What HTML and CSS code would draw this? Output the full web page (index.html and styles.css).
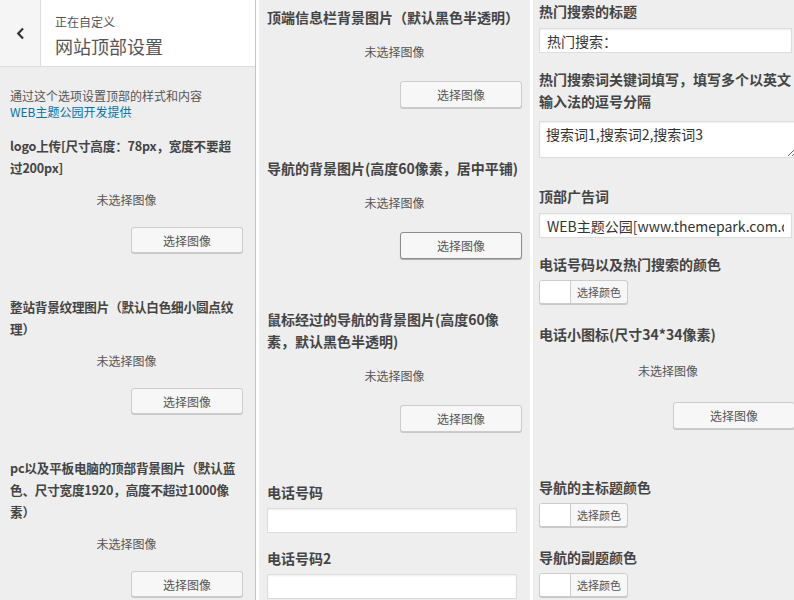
FILE: index.html
```html
<!DOCTYPE html>
<html lang="zh-CN">
<head>
    <meta charset="UTF-8">
    <meta name="viewport" content="width=device-width, initial-scale=1.0">
    <title>网站顶部设置</title>

    <link rel="stylesheet" href="styles.css">

</head>
<body>

    <div class="screens">

        <!-- panel 1 -->
        <section class="panel panel-first">
            <header class="panel-head">
                <div class="back-btn">
                    <svg width="9" height="13" viewBox="0 0 9 13">
                        <path d="M7 1.5 L2.2 6.5 L7 11.5" fill="none" stroke="#333" stroke-width="2.2"/>
                    </svg>
                </div>
                <div class="head-title">
                    <span class="head-sub">正在自定义</span>
                    <h2 class="head-main">网站顶部设置</h2>
                </div>
            </header>
            <div class="panel-body">
                <p class="panel-desc">通过这个选项设置顶部的样式和内容<br><a class="panel-link" href="#">WEB主题公园开发提供</a></p>

                <div class="control control-image">
                    <span class="control-title">logo上传[尺寸高度：78px，宽度不要超<br>过200px]</span>
                    <div class="placeholder">未选择图像</div>
                    <div class="actions"><button class="button">选择图像</button></div>
                </div>
                <div class="control control-image">
                    <span class="control-title">整站背景纹理图片（默认白色细小圆点纹<br>理）</span>
                    <div class="placeholder">未选择图像</div>
                    <div class="actions"><button class="button">选择图像</button></div>
                </div>
                <div class="control control-image">
                    <span class="control-title">pc以及平板电脑的顶部背景图片（默认蓝<br>色、尺寸宽度1920，高度不超过1000像<br>素）</span>
                    <div class="placeholder">未选择图像</div>
                    <div class="actions"><button class="button">选择图像</button></div>
                </div>
            </div>
        </section>

        <!-- panel 2 -->
        <section class="panel panel-mid">
            <div class="control control-image">
                <span class="control-title">顶端信息栏背景图片（默认黑色半透明）</span>
                <div class="placeholder">未选择图像</div>
                <div class="actions"><button class="button">选择图像</button></div>
            </div>
            <div class="control control-image">
                <span class="control-title">导航的背景图片(高度60像素，居中平铺)</span>
                <div class="placeholder">未选择图像</div>
                <div class="actions"><button class="button is-focus">选择图像</button></div>
            </div>
            <div class="control control-image">
                <span class="control-title">鼠标经过的导航的背景图片(高度60像<br>素，默认黑色半透明)</span>
                <div class="placeholder">未选择图像</div>
                <div class="actions"><button class="button">选择图像</button></div>
            </div>
            <div class="control control-text">
                <span class="control-title">电话号码</span>
                <input class="field" type="text" value="">
            </div>
            <div class="control control-text">
                <span class="control-title">电话号码2</span>
                <input class="field" type="text" value="">
            </div>
        </section>

        <!-- panel 3 -->
        <section class="panel panel-last">
            <div class="control control-text">
                <span class="control-title">热门搜索的标题</span>
                <input class="field" type="text" value="热门搜索：">
            </div>
            <div class="control control-area">
                <span class="control-title">热门搜索词关键词填写，填写多个以英文<br>输入法的逗号分隔</span>
                <textarea class="field field-area">搜索词1,搜索词2,搜索词3</textarea>
            </div>
            <div class="control control-text">
                <span class="control-title">顶部广告词</span>
                <input class="field" type="text" value="WEB主题公园[www.themepark.com.cn]">
            </div>
            <div class="control control-color">
                <span class="control-title">电话号码以及热门搜索的颜色</span>
                <span class="color-result"><span class="color-swatch"></span><span class="color-label">选择颜色</span></span>
            </div>
            <div class="control control-image">
                <span class="control-title">电话小图标(尺寸34*34像素)</span>
                <div class="placeholder">未选择图像</div>
                <div class="actions"><button class="button">选择图像</button></div>
            </div>
            <div class="control control-color">
                <span class="control-title">导航的主标题颜色</span>
                <span class="color-result"><span class="color-swatch"></span><span class="color-label">选择颜色</span></span>
            </div>
            <div class="control control-color">
                <span class="control-title">导航的副题颜色</span>
                <span class="color-result"><span class="color-swatch"></span><span class="color-label">选择颜色</span></span>
            </div>
        </section>

    </div>

</body>
</html>
```

FILE: styles.css
```css
body, body *, body *::before, body *::after {
    box-sizing: border-box;
    padding: 0;
    margin: 0;
}
html, body {
    height: 600px;
    overflow: hidden;
}
body {
    background-color: #fff;
    font-family: "Noto Sans CJK SC", sans-serif;
    color: #555;
    text-autospace: no-autospace;
}
:root {
    --panel-bgc: #eeeeee;
    --line-color: #dddddd;
    --btn-border: #cccccc;
}
.screens {
    display: flex;
    gap: 3px;
    height: 600px;
}
.panel {
    --title-gap: 12px;
    --btn-gap: 18px;
    --btn-h: 26px;
    --btn-w: 112px;
    --img-gap: 43px;
    background-color: var(--panel-bgc);
    flex-shrink: 0;
    height: 100%;
}
.panel-first {
    width: 256px;
    border-right: 1px solid #c4c4c4;
}
.panel-mid {
    --title-gap: 15px;
    --btn-gap: 20px;
    --btn-h: 27px;
    --btn-w: 122px;
    --img-gap: 49px;
    width: 271px;
    padding: 6px 8px 0 8px;
}
.panel-last {
    --title-gap: 17px;
    --btn-gap: 22px;
    --btn-h: 27px;
    --btn-w: 122px;
    --img-gap: 47px;
    width: 270px;
    padding: 0 6px;
}

/* header of the first panel */
.panel-head {
    display: flex;
    height: 67px;
    background-color: #fff;
    border-bottom: 1px solid var(--line-color);
}
.back-btn {
    width: 41px;
    background-color: #f5f5f5;
    border-right: 1px solid var(--line-color);
    display: flex;
    align-items: center;
    justify-content: center;
}
.head-title {
    padding: 12px 0 0 14px;
}
.head-sub {
    display: block;
    font-size: 12px;
    line-height: 20px;
}
.head-main {
    font-size: 18px;
    font-weight: normal;
    line-height: 24px;
    margin-top: 2px;
}
.panel-body {
    padding: 21px 12px 0 10px;
}
.panel-desc {
    font-size: 12px;
    line-height: 16px;
    margin-bottom: 15px;
}
.panel-link {
    color: #0073aa;
    text-decoration: none;
}

/* controls */
.control-title {
    display: block;
    font-size: 14px;
    font-weight: bold;
    line-height: 22px;
    color: #444;
    white-space: nowrap;
    margin-bottom: 6px;
}
.panel-first .control-title {
    font-size: 12.6px;
    letter-spacing: -0.2px;
}
.control-text {
    margin-bottom: 15px;
}
.panel-mid .control-text .control-title {
    margin-bottom: 5px;
}
.panel-mid .control-text {
    margin-bottom: 14px;
}
.control-area {
    margin-bottom: 27px;
}
.control-area .control-title {
    margin-bottom: 9px;
}
.control-color {
    margin-bottom: 19px;
}
.control-color .control-title {
    margin-bottom: 5px;
}
.control-image {
    margin-bottom: var(--img-gap);
}
.control-image .control-title {
    margin-bottom: var(--title-gap);
}
.placeholder {
    text-align: center;
    font-size: 12px;
    line-height: 18px;
    margin-bottom: var(--btn-gap);
}
.actions {
    display: flex;
    justify-content: flex-end;
}
.panel-last .control-image .actions {
    margin-right: 2px;
}
.button {
    font-family: inherit;
    font-size: 12px;
    color: #555;
    width: var(--btn-w);
    height: var(--btn-h);
    background-color: #f7f7f7;
    border: 1px solid var(--btn-border);
    border-radius: 3px;
    box-shadow: 0 1px 0 #c8c8c8;
}
.button.is-focus {
    border-color: #8c8c8c;
    box-shadow: 0 1px 1px #aaa;
}

/* fields */
.field {
    display: block;
    font-family: inherit;
    font-size: 14px;
    color: #333;
    width: 98%;
    height: 25px;
    padding: 0 7px;
    background-color: #fff;
    border: 1px solid var(--line-color);
    box-shadow: inset 0 1px 2px rgba(0, 0, 0, 0.07);
    outline: none;
}
.field-area {
    width: 100%;
    height: 37px;
    padding: 3px 6px;
    line-height: 18px;
    resize: vertical;
    overflow: hidden;
}

/* color picker */
.color-result {
    display: flex;
    width: fit-content;
    height: 24px;
    background-color: #f7f7f7;
    border: 1px solid var(--btn-border);
    border-radius: 3px;
    box-shadow: 0 1px 0 #c8c8c8;
    overflow: hidden;
}
.color-swatch {
    width: 31px;
    background-color: #fff;
    border-right: 1px solid var(--btn-border);
}
.color-label {
    font-size: 11px;
    line-height: 22px;
    padding: 0 6px;
}
```
